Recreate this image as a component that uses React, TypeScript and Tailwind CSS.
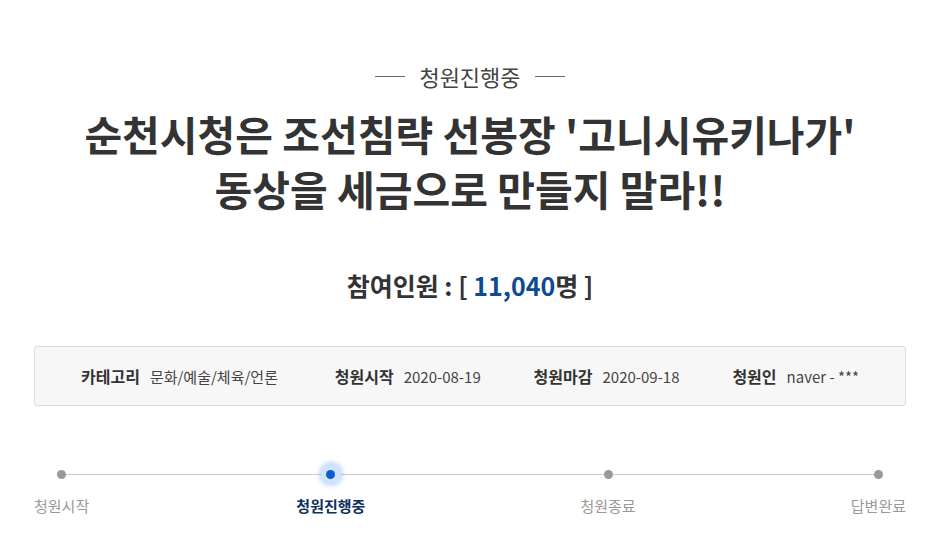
import React from "react";

const font = { fontFamily: '"Noto Sans CJK KR", "Noto Sans", sans-serif' };

function Step({ label, active }: { label: string; active?: boolean }) {
  return (
    <div className="flex flex-col items-center">
      <div className="h-[20px] flex items-center justify-center relative z-10">
        {active ? (
          <div className="w-[20px] h-[20px] rounded-full bg-[#cfe3fb] shadow-[0_0_4px_2px_rgba(120,170,240,0.45)] flex items-center justify-center">
            <div className="w-[9px] h-[9px] rounded-full bg-[#0a5fd0]" />
          </div>
        ) : (
          <div className="w-[9px] h-[9px] rounded-full bg-[#999]" />
        )}
      </div>
      <div
        className={
          "mt-[12px] text-[15px] leading-[20px] " +
          (active ? "font-bold text-[#0f2f5f]" : "text-[#999]")
        }
      >
        {label}
      </div>
    </div>
  );
}

export default function App() {
  return (
    <div className="w-[940px] h-[537px] bg-white overflow-hidden" style={font}>
      <div className="pt-[61px] flex items-center justify-center gap-[14px]">
        <div className="w-[30px] h-px bg-[#666]" />
        <div className="text-[22px] leading-[30px] text-[#444]">청원진행중</div>
        <div className="w-[30px] h-px bg-[#666]" />
      </div>
      <h1 className="mt-[15px] text-center text-[41px] leading-[55px] font-bold text-[#333]">
        순천시청은 조선침략 선봉장 '고니시유키나가'
        <br />
        동상을 세금으로 만들지 말라!!
      </h1>
      <div className="mt-[52px] text-center text-[25px] leading-[34px] font-bold text-[#333]">
        참여인원 : [ <span className="text-[#0d4a94]">11,040</span>명 ]
      </div>
      <div className="mt-[44px] mx-[34px] h-[60px] bg-[#f7f7f7] border border-[#dcdcdc] rounded-[3px] flex items-center justify-between pl-[46px] pr-[46px] text-[15px] text-[#444]">
        <div className="flex items-baseline gap-[10px]">
          <span className="font-bold text-[16px] text-[#333]">카테고리</span>
          <span>문화/예술/체육/언론</span>
        </div>
        <div className="flex items-baseline gap-[10px] ml-[4px]">
          <span className="font-bold text-[16px] text-[#333]">청원시작</span>
          <span>2020-08-19</span>
        </div>
        <div className="flex items-baseline gap-[10px]">
          <span className="font-bold text-[16px] text-[#333]">청원마감</span>
          <span>2020-09-18</span>
        </div>
        <div className="flex items-baseline gap-[10px]">
          <span className="font-bold text-[16px] text-[#333]">청원인</span>
          <span>naver - ***</span>
        </div>
      </div>
      <div className="mt-[58px] mx-[34px] relative flex justify-between">
        <div className="absolute left-[28px] right-[28px] top-[10px] h-px bg-[#ccc]" />
        <Step label="청원시작" />
        <div className="-ml-[8px]">
          <Step label="청원진행중" active />
        </div>
        <Step label="청원종료" />
        <Step label="답변완료" />
      </div>
    </div>
  );
}
